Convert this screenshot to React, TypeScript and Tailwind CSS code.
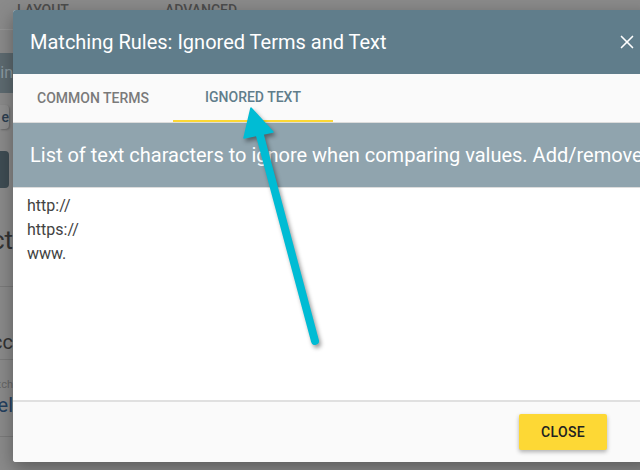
import { X } from 'lucide-react';

const TERMS = ['http://', 'https://', 'www.'];

function BackgroundPage() {
  return (
    <div className="flex flex-col h-full bg-[#8a8a8a] text-[#4d4d4d]">
      {/* Tabs row peeking out above the dialog */}
      <div className="h-[30px] flex text-[14px] font-medium leading-[20px] border-b border-[#959595]">
        <span className="ml-[17px]">LAYOUT</span>
        <span className="ml-[96px]">ADVANCED</span>
      </div>

      {/* Left column, mostly hidden by the dialog */}
      <div className="w-[13px] flex flex-col overflow-hidden">
        <div className="h-[23px]" />
        <div className="h-[40px] bg-[#5d6a70] flex items-center justify-end whitespace-nowrap text-[16px] text-[#8c9ba2]">
          Domain
        </div>
        <div className="h-[12px]" />
        <div className="h-[24px] w-[9px] bg-[#8f8f8f] rounded-r-sm shadow-[1px_1px_2px_rgba(0,0,0,0.25)] flex items-center justify-end whitespace-nowrap text-[14px] font-medium text-[#2c3e50] overflow-hidden">
          e
        </div>
        <div className="h-[22px]" />
        <div className="h-[37px] w-[9px] bg-[#3e4c53] rounded-r-sm" />
        <div className="h-[19px]" />
        <div className="h-[66px] flex items-center justify-end whitespace-nowrap text-[26px] text-[#333]">
          Select
        </div>
        <div className="h-[14px] border-b border-[#7a7a7a]" />
        <div className="h-[73px] border-b border-[#7a7a7a] flex items-end pb-[2px] justify-end whitespace-nowrap text-[20px] text-[#333]">
          Acc
        </div>
        <div className="h-[77px] border-b border-[#7a7a7a] flex flex-col justify-center whitespace-nowrap">
          <div className="flex justify-end text-[11px] text-[#666] leading-[14px]">Match</div>
          <div className="flex justify-end text-[20px] text-[#23405f] leading-[26px]">Wel</div>
        </div>
      </div>
    </div>
  );
}

export default function App() {
  return (
    <div
      className="relative w-[640px] h-[470px] overflow-hidden"
      style={{ fontFamily: 'Roboto, "Noto Sans", sans-serif' }}
    >
      <BackgroundPage />

      {/* Dialog */}
      <div className="absolute left-[13px] top-[10px] w-[640px] h-[452px] flex flex-col bg-white rounded-[3px] overflow-hidden shadow-[0_6px_18px_rgba(0,0,0,0.35)]">
        <div className="h-[64px] shrink-0 bg-[#607d8b] flex items-center justify-between pl-[17px] pr-[15px]">
          <h2 className="text-[20px] text-white font-normal">Matching Rules: Ignored Terms and Text</h2>
          <X className="w-[22px] h-[22px] text-white" strokeWidth={1.8} />
        </div>

        <div className="h-[49px] shrink-0 bg-[#fafafa] flex border-b border-[#dcdcdc]">
          <div className="w-[160px] flex items-center justify-center text-[14px] font-medium text-[#7a7a7a]">
            COMMON TERMS
          </div>
          <div className="w-[160px] flex items-center justify-center text-[14px] font-medium text-[#607d8b] border-b-2 border-[#fdd835]">
            IGNORED TEXT
          </div>
        </div>

        <div className="h-[65px] shrink-0 bg-[#90a4ae] border-b border-[#dddddd] flex items-center pl-[17px] whitespace-nowrap">
          <p className="text-[20px] text-white">
            List of text characters to ignore when comparing values. Add/remove items as needed.
          </p>
        </div>

        <div className="flex-1 flex flex-col pt-[6px] pl-[14px] text-[16px] leading-[24px] text-[#424242]">
          {TERMS.map((t) => (
            <div key={t}>{t}</div>
          ))}
        </div>

        <div className="h-[62px] shrink-0 bg-[#fafafa] border-t-2 border-[#e0e0e0] flex items-start justify-end pt-[12px] pr-[46px]">
          <button className="w-[88px] h-[36px] bg-[#fdd835] rounded-[2px] shadow-[0_2px_4px_rgba(0,0,0,0.3)] text-[14px] font-medium text-[#212121] tracking-[0.3px]">
            CLOSE
          </button>
        </div>
      </div>

      {/* Annotation arrow */}
      <svg
        className="absolute inset-0 pointer-events-none drop-shadow-[2px_3px_2px_rgba(0,0,0,0.4)]"
        width="640"
        height="470"
        viewBox="0 0 640 470"
      >
        <line x1="315" y1="341" x2="258" y2="128" stroke="#00bcd4" strokeWidth="8" strokeLinecap="round" />
        <polygon points="251,108 244,138 273,132" fill="#00bcd4" stroke="#00bcd4" strokeWidth="1.5" strokeLinejoin="round" />
      </svg>
    </div>
  );
}
